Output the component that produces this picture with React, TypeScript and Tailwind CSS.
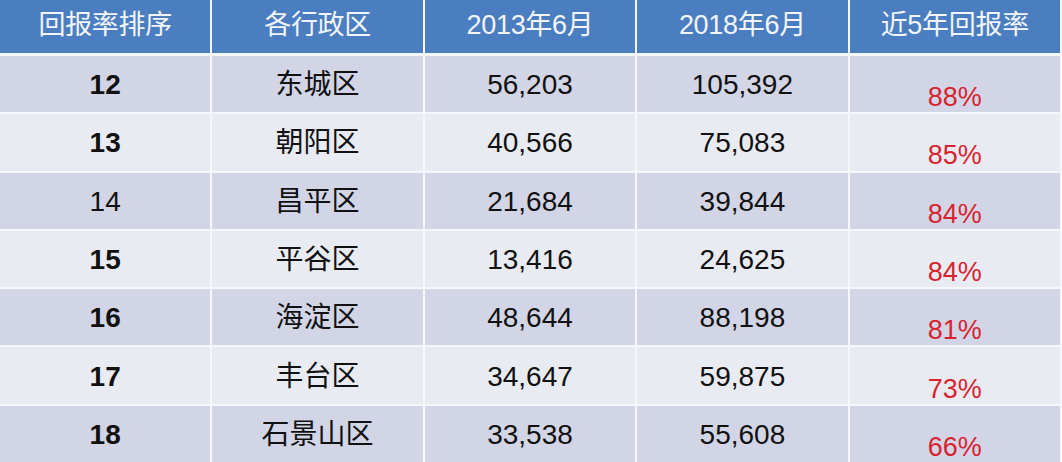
import { FC } from 'react';

type Row = {
  rank: string;
  district: string;
  y2013: string;
  y2018: string;
  rate: string;
  bold: boolean;
};

const rows: Row[] = [
  { rank: '12', district: '东城区', y2013: '56,203', y2018: '105,392', rate: '88%', bold: true },
  { rank: '13', district: '朝阳区', y2013: '40,566', y2018: '75,083', rate: '85%', bold: true },
  { rank: '14', district: '昌平区', y2013: '21,684', y2018: '39,844', rate: '84%', bold: false },
  { rank: '15', district: '平谷区', y2013: '13,416', y2018: '24,625', rate: '84%', bold: true },
  { rank: '16', district: '海淀区', y2013: '48,644', y2018: '88,198', rate: '81%', bold: true },
  { rank: '17', district: '丰台区', y2013: '34,647', y2018: '59,875', rate: '73%', bold: true },
  { rank: '18', district: '石景山区', y2013: '33,538', y2018: '55,608', rate: '66%', bold: true },
];

const headers = ['回报率排序', '各行政区', '2013年6月', '2018年6月', '近5年回报率'];

const font = { fontFamily: '"Liberation Sans", "Noto Sans CJK SC", sans-serif' };

const App: FC = () => {
  return (
    <div
      className="w-[1062px] h-[462px] bg-[#f6f7fb] overflow-hidden text-[#111]"
      style={font}
    >
      <div className="w-[1060px] grid grid-cols-5 gap-x-[2px] h-[53px] bg-[#f6f7fb]">
        {headers.map((h) => (
          <div
            key={h}
            className="bg-[#4b7ec0] flex items-center justify-center text-[27px] leading-none pb-[2px] text-[#f2f5fb] tracking-[-0.3px]"
          >
            {h}
          </div>
        ))}
      </div>
      <div className="w-[1060px] mt-[3px] flex flex-col gap-y-[2px]">
        {rows.map((r, i) => {
          const bg = i % 2 === 0 ? 'bg-[#d1d5e6]' : 'bg-[#e9ebf3]';
          return (
            <div key={r.rank} className="grid grid-cols-5 gap-x-[2px] h-[56.3px] leading-none">
              <div
                className={`${bg} flex items-center justify-center text-[28px] pt-[2px] ${
                  r.bold ? 'font-bold' : ''
                }`}
              >
                {r.rank}
              </div>
              <div className={`${bg} flex items-center justify-center text-[28px] pt-[2px]`}>
                {r.district}
              </div>
              <div className={`${bg} flex items-center justify-center text-[28px] pt-[2px]`}>
                {r.y2013}
              </div>
              <div className={`${bg} flex items-center justify-center text-[28px] pt-[2px]`}>
                {r.y2018}
              </div>
              <div
                className={`${bg} flex items-center justify-center text-[27px] text-[#d8232f] pt-[27px]`}
              >
                {r.rate}
              </div>
            </div>
          );
        })}
      </div>
    </div>
  );
};

export default App;
